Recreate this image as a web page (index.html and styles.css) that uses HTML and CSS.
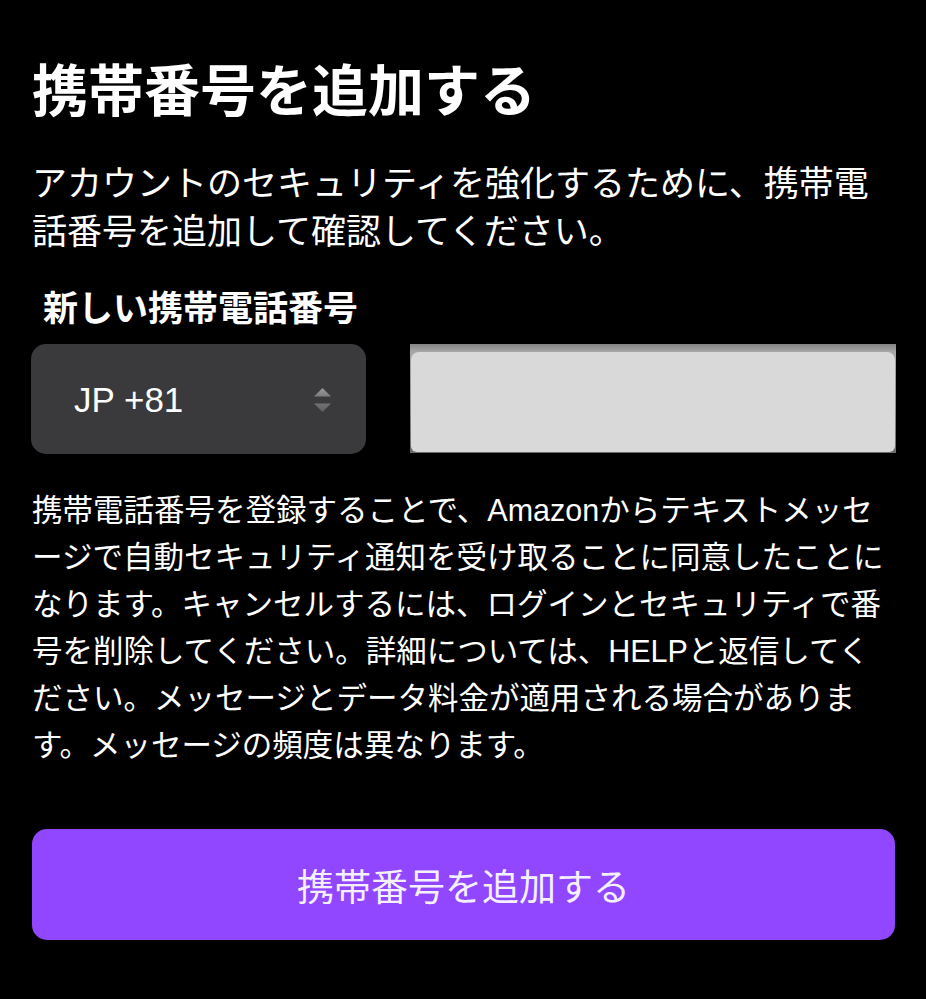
FILE: index.html
```html
<!DOCTYPE html>
<html lang="ja">
<head>
<meta charset="utf-8">
<title>携帯番号を追加する</title>
<link rel="stylesheet" href="styles.css">
</head>
<body>
<main class="page">
  <h1 class="title">携帯番号を追加する</h1>
  <p class="intro">アカウントのセキュリティを強化するために、携帯電話番号を追加して確認してください。</p>
  <label class="field-label" for="phone">新しい携帯電話番号</label>
  <div class="phone-row">
    <div class="country-select">
      <span class="country-value">JP +81</span>
      <svg class="select-arrows" width="17" height="25" viewBox="0 0 17 25" aria-hidden="true">
        <defs>
          <linearGradient id="up" x1="0" y1="0" x2="0" y2="1">
            <stop offset="0" stop-color="#9a9a9a"/>
            <stop offset="1" stop-color="#7c7c7c"/>
          </linearGradient>
          <linearGradient id="down" x1="0" y1="0" x2="0" y2="1">
            <stop offset="0" stop-color="#727272"/>
            <stop offset="1" stop-color="#5e5e5e"/>
          </linearGradient>
        </defs>
        <polygon points="0,8.5 8.5,0 17,8.5" fill="url(#up)"/>
        <polygon points="0,15.5 17,15.5 8.5,24" fill="url(#down)"/>
      </svg>
    </div>
    <div class="phone-field">
      <div class="phone-inner" id="phone"></div>
    </div>
  </div>
  <p class="notice">携帯電話番号を登録することで、Amazonからテキストメッセージで自動セキュリティ通知を受け取ることに同意したことになります。キャンセルするには、ログインとセキュリティで番号を削除してください。詳細については、HELPと返信してください。メッセージとデータ料金が適用される場合があります。メッセージの頻度は異なります。</p>
  <button class="submit" type="button">携帯番号を追加する</button>
</main>
</body>
</html>
```

FILE: styles.css
```css
html, body {
  margin: 0;
  padding: 0;
  background: #000;
}

body {
  color: #fff;
  font-family: "Liberation Sans", "Noto Sans CJK JP", sans-serif;
  line-break: loose;
}

.page {
  display: flex;
  flex-direction: column;
  padding: 60px 31px 40px 32px;
}

.title {
  margin: 0;
  font-size: 56px;
  line-height: 64px;
  font-weight: 700;
  letter-spacing: 0;
}

.intro {
  margin: 36px 0 0;
  font-size: 35px;
  line-height: 48px;
  font-weight: 400;
}

.field-label {
  display: block;
  margin: 31px 0 0 11px;
  font-size: 35px;
  line-height: 44px;
  font-weight: 700;
}

.phone-row {
  display: flex;
  align-items: stretch;
  gap: 44px;
  margin-top: 13px;
  height: 110px;
  margin-left: -1px;
}

.country-select {
  flex: 0 0 335px;
  display: flex;
  align-items: center;
  justify-content: space-between;
  box-sizing: border-box;
  padding: 0 35px 0 43px;
  background: #3a3a3c;
  border-radius: 15px;
}

.country-value {
  font-size: 35px;
  line-height: 40px;
  color: #fff;
  margin-top: 1px;
}

.select-arrows {
  display: block;
  margin-top: 2px;
}

.phone-field {
  flex: 1 1 auto;
  margin-right: -1px;
  height: 109px;
  box-sizing: border-box;
  padding: 8px 1px 1px 1px;
  background: linear-gradient(to bottom, #838383 0, #9a9a9a 5px, #a8a8a8 8px, #8c8c8c 60%, #6a6a6a 100%);
}

.phone-inner {
  height: 100%;
  background: #d9d9d9;
  border-radius: 8px 8px 6px 6px;
}

.notice {
  margin: 33px 0 0;
  font-size: 30.5px;
  line-height: 47px;
  font-weight: 400;
}

.submit {
  margin-top: 60px;
  height: 111px;
  width: 100%;
  border: none;
  border-radius: 15px;
  background: #9146ff;
  color: #f4f0ff;
  font-family: "Liberation Sans", "Noto Sans CJK JP", sans-serif;
  font-size: 37px;
  font-weight: 400;
  padding: 0;
}
```
